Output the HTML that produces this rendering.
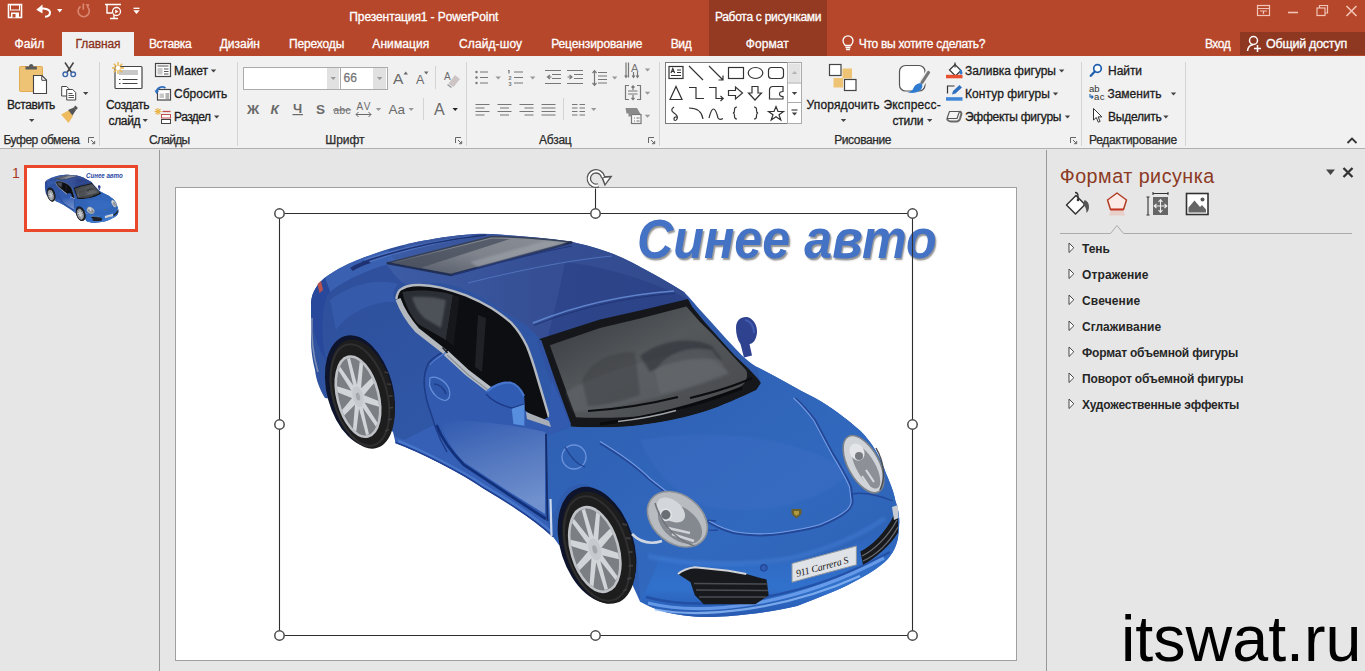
<!DOCTYPE html>
<html lang="ru">
<head>
<meta charset="utf-8">
<title>PowerPoint</title>
<style>
html,body{margin:0;padding:0;}
body{width:1365px;height:671px;overflow:hidden;position:relative;background:#e6e6e6;font-family:"Liberation Sans",sans-serif;font-size:12px;color:#262626;}
.abs,.t{position:absolute;}
.t{white-space:nowrap;line-height:14px;font-size:12px;color:#1c1c1c;-webkit-text-stroke:.300px currentColor;}
.w{color:#fff;}
#titlebar{position:absolute;left:0;top:0;width:1365px;height:56px;background:#b7472a;}
#ctx{position:absolute;left:709px;top:0;width:118px;height:56px;background:#943a22;}
#share{position:absolute;left:1240px;top:32px;width:125px;height:23px;background:#8f3821;}
#hometab{position:absolute;left:62px;top:32px;width:72px;height:25px;background:#f1f1f1;}
#ribbon{position:absolute;left:0;top:56px;width:1365px;height:92px;background:#f1f1f1;border-bottom:1px solid #b0b0b0;}
.sep{position:absolute;top:62px;width:1px;height:84px;background:#d4d4d4;}
.gl{position:absolute;top:133px;font-size:12px;line-height:14px;color:#2b2b2b;white-space:nowrap;-webkit-text-stroke:.250px currentColor;}
#leftdiv{position:absolute;left:159px;top:150px;width:1px;height:521px;background:#989898;}
#rightdiv{position:absolute;left:1046px;top:150px;width:1px;height:521px;background:#989898;}
#slide{position:absolute;left:175px;top:187px;width:840px;height:472px;background:#fff;border:1px solid #a0a0a0;}
#thumb{position:absolute;left:24px;top:165px;width:108px;height:61px;background:#fff;border:3px solid #e9492a;}
#wm{position:absolute;left:1121px;top:602px;font-size:64.6px;line-height:74px;color:#000;white-space:nowrap;}
.pi{position:absolute;left:1082px;font-weight:bold;font-size:12px;line-height:14px;color:#262626;white-space:nowrap;}
.tri{position:absolute;left:1068px;width:7px;height:9px;}
.hnd{position:absolute;width:8px;height:8px;border:1.5px solid #6a6a6a;border-radius:50%;background:#fff;}
</style>
</head>
<body>
<!-- ===== title bar + tabs ===== -->
<div id="titlebar"></div>
<div id="ctx"></div>
<div id="share"></div>
<div id="hometab"></div>
<div id="ribbon"></div>
<!-- QAT icons -->
<svg class="abs" style="left:0;top:0" width="160" height="32" viewBox="0 0 160 32">
 <!-- save -->
 <path d="M8.5 4.5h13v13h-13z" fill="none" stroke="#fff" stroke-width="1.6"/>
 <rect x="10.5" y="5" width="9" height="5" fill="#b7472a" stroke="#fff" stroke-width="1"/>
 <rect x="11" y="12.5" width="8" height="5" fill="#fff"/><rect x="12.5" y="14" width="3" height="3.5" fill="#b7472a"/>
 <!-- undo -->
 <path d="M38 9.5 C44 7.5 50 9 50 12.5 C50 15 48 16.5 45 16.8" fill="none" stroke="#fff" stroke-width="2"/>
 <path d="M36.3 9.8 L42.5 4.5 L42.5 13.5z" fill="#fff"/>
 <path d="M57 9h5.4l-2.7 3.4z" fill="#fff"/>
 <!-- redo dimmed -->
 <path d="M80.5 6.5 A5.6 5.6 0 1 0 87.5 7" fill="none" stroke="#d98672" stroke-width="1.6"/>
 <path d="M83.3 3.5v6.2" stroke="#d98672" stroke-width="1.6"/><path d="M85.5 4l4 .3-1.6 3.6z" fill="#d98672"/>
 <!-- present -->
 <path d="M105 4.5h16M107 5v8h5M110 18.5h8M114 14v4" fill="none" stroke="#fff" stroke-width="1.4"/>
 <circle cx="116.5" cy="11.5" r="4" fill="#b7472a" stroke="#fff" stroke-width="1.3"/><path d="M115.2 9.5v4l3.3-2z" fill="#fff"/>
 <!-- customise -->
 <path d="M133.5 8.3h6" stroke="#fff" stroke-width="1.3"/><path d="M133.3 10.3h6.4l-3.2 3.6z" fill="#fff"/>
</svg>
<div class="t w" style="letter-spacing:-0.09px;left:349.3px;top:10px;font-size:12px;">Презентация1 - PowerPoint</div>
<div class="t w" style="letter-spacing:-0.28px;left:714.9px;top:10px;font-size:12px;">Работа с рисунками</div>
<!-- window controls -->
<svg class="abs" style="left:1250px;top:0" width="115" height="24" viewBox="0 0 115 24">
 <g fill="none" stroke="#f0c4b6" stroke-width="1.2">
 <rect x="7.5" y="5.5" width="12" height="10"/><path d="M7.5 8.5h12M10 11h7M13.5 11v3"/>
 <path d="M38 12.5h10" stroke-width="1.6"/>
 <rect x="67" y="8" width="8" height="7.5"/><path d="M69.5 8V5.5h8V13h-2.5"/>
 <path d="M96.5 6l10 10M106.5 6l-10 10" stroke-width="1.6"/>
 </g>
</svg>

<div class="t w" style="letter-spacing:0.06px;left:14.5px;top:37px;">Файл</div>
<div class="t" style="letter-spacing:-0.10px;left:75.5px;top:37px;color:#8a3019;">Главная</div>
<div class="t w" style="letter-spacing:-0.29px;left:148.9px;top:37px;">Вставка</div>
<div class="t w" style="letter-spacing:-0.01px;left:219.7px;top:37px;">Дизайн</div>
<div class="t w" style="letter-spacing:-0.12px;left:288.9px;top:37px;">Переходы</div>
<div class="t w" style="letter-spacing:0.09px;left:372.3px;top:37px;">Анимация</div>
<div class="t w" style="letter-spacing:0.11px;left:459.0px;top:37px;">Слайд-шоу</div>
<div class="t w" style="letter-spacing:-0.11px;left:551.2px;top:37px;">Рецензирование</div>
<div class="t w" style="letter-spacing:-0.37px;left:670.7px;top:37px;">Вид</div>
<div class="t w" style="letter-spacing:0.06px;left:745.8px;top:37px;">Формат</div>
<svg class="abs" style="left:840px;top:34px" width="16" height="18" viewBox="0 0 16 18"><path d="M5.2 11.5 C3.5 9.5 3 8.2 3 6.8 A5 5 0 0 1 13 6.8 C13 8.2 12.5 9.500 10.800 11.5z M5.5 13.500h5 M6 15.500h4" fill="none" stroke="#fff" stroke-width="1.300"/></svg>
<div class="t w" style="letter-spacing:-0.29px;left:858.8px;top:37px;">Что вы хотите сделать?</div>
<div class="t w" style="letter-spacing:-0.44px;left:1204.9px;top:37px;">Вход</div>
<svg class="abs" style="left:1245px;top:34px" width="18" height="20" viewBox="0 0 18 20"><circle cx="8.5" cy="6.500" r="4" fill="none" stroke="#fff" stroke-width="1.500"/><path d="M2.500 17 C3 13 5 11 8 10.800" fill="none" stroke="#fff" stroke-width="1.500"/><path d="M9 14.500h7M12.500 11v7" stroke="#fff" stroke-width="1.500"/></svg>
<div class="t w" style="letter-spacing:-0.25px;left:1266.0px;top:37px;font-size:12.5px;">Общий доступ</div>

<!-- separators -->
<div class="sep" style="left:99px"></div><div class="sep" style="left:237px"></div><div class="sep" style="left:466px"></div><div class="sep" style="left:659px"></div><div class="sep" style="left:1081px"></div><div class="sep" style="left:1185px"></div>
<div class="sep" style="left:435px;top:66px;height:23px"></div><div class="sep" style="left:423px;top:98px;height:22px"></div><div class="sep" style="left:563px;top:98px;height:22px"></div>
<!-- group labels -->
<div class="gl" style="letter-spacing:-0.45px;left:3.4px">Буфер обмена</div>
<div class="gl" style="letter-spacing:-0.70px;left:149.0px">Слайды</div>
<div class="gl" style="letter-spacing:-0.04px;left:325.2px">Шрифт</div>
<div class="gl" style="letter-spacing:-0.23px;left:539.0px">Абзац</div>
<div class="gl" style="letter-spacing:-0.39px;left:834.2px">Рисование</div>
<div class="gl" style="letter-spacing:-0.24px;left:1088.9px">Редактирование</div>
<!-- clipboard -->
<div class="t" style="letter-spacing:-0.35px;left:6.9px;top:98px;">Вставить</div>
<div class="t" style="letter-spacing:-0.34px;left:105.9px;top:98px;">Создать</div>
<div class="t" style="letter-spacing:-0.32px;left:108.5px;top:114px;">слайд</div>
<div class="t" style="letter-spacing:-0.01px;left:174.1px;top:64px;">Макет</div>
<div class="t" style="letter-spacing:-0.02px;left:174.1px;top:87px;">Сбросить</div>
<div class="t" style="letter-spacing:-0.55px;left:174.1px;top:110px;">Раздел</div>
<!-- font -->
<div class="abs" style="left:243px;top:67px;width:96px;height:21px;background:#fff;border:1px solid #ababab;"></div>
<div class="abs" style="left:327px;top:68px;width:12px;height:21px;background:#e1e1e1;"></div>
<div class="abs" style="left:340px;top:67px;width:46px;height:21px;background:#fff;border:1px solid #ababab;"></div>
<div class="abs" style="left:373px;top:68px;width:13px;height:21px;background:#e1e1e1;"></div>
<div class="t" style="letter-spacing:0.02px;left:343.5px;top:71px;color:#777;">66</div>
<!-- drawing -->
<div class="t" style="letter-spacing:0.16px;left:806.5px;top:98px;">Упорядочить</div>
<div class="t" style="letter-spacing:0.16px;left:883.5px;top:98px;">Экспресс-</div>
<div class="t" style="letter-spacing:-0.22px;left:892.4px;top:114px;">стили</div>
<div class="t" style="letter-spacing:-0.05px;left:965.0px;top:64px;">Заливка фигуры</div>
<div class="t" style="letter-spacing:0.07px;left:965.0px;top:87px;">Контур фигуры</div>
<div class="t" style="letter-spacing:-0.27px;left:965.0px;top:110px;">Эффекты фигуры</div>
<!-- editing -->
<div class="t" style="letter-spacing:-0.07px;left:1108.1px;top:64px;">Найти</div>
<div class="t" style="letter-spacing:0.02px;left:1107.4px;top:87px;">Заменить</div>
<div class="t" style="letter-spacing:-0.24px;left:1108.1px;top:110px;">Выделить</div>
<svg class="abs" style="left:0;top:56px" width="1365" height="92" viewBox="0 56 1365 92" font-family="Liberation Sans, sans-serif">
<defs><path id="dd" d="M0 0h5.400l-2.700 3z"/></defs>
<!-- ===== clipboard ===== -->
<rect x="19.500" y="66.500" width="23" height="25" rx="1" fill="#eec373" stroke="#e0ab52" stroke-width="1"/>
<path d="M25.500 69.500v-3h3.500c0-1.500 .800-2.500 2.200-2.500s2.200 1 2.200 2.500h3.500v3z" fill="#5a5a5a"/>
<path d="M33.500 75.500h8.500l4.500 4.500v13.500h-13z" fill="#fff" stroke="#444" stroke-width="1.100"/><path d="M41.800 75.800v4.500h4.500" fill="none" stroke="#444" stroke-width="1"/>
<use href="#dd" x="29" y="119" fill="#444"/>
<!-- scissors -->
<path d="M65 62.500l6.500 10M73.500 62.500l-6.500 10" stroke="#444" stroke-width="1.500" fill="none"/>
<circle cx="65.300" cy="74.300" r="2.300" fill="none" stroke="#3b66a8" stroke-width="1.400"/><circle cx="73.200" cy="74.300" r="2.300" fill="none" stroke="#3b66a8" stroke-width="1.400"/>
<!-- copy -->
<path d="M61.700 86.500h5l2 2v7.500h-7z" fill="#fff" stroke="#444" stroke-width="1"/>
<path d="M66.700 89.500h6l3 3v7.500h-9z" fill="#fff" stroke="#444" stroke-width="1"/><path d="M68.500 93.500h4M68.500 95.500h5.500M68.500 97.500h5.500" stroke="#444" stroke-width=".900"/>
<use href="#dd" x="83" y="92" fill="#444"/>
<!-- format painter -->
<path d="M61 114.500l7.500-4 4.500 5.500-4.500 7z" fill="#eebb5e"/>
<path d="M68 110l6-2.500 2 2.500-3.500 5.500z" fill="#555"/><path d="M74.500 106.500l2.500 2.500" stroke="#555" stroke-width="2.500"/>
<!-- launcher -->
<g id="ln" fill="none" stroke="#666" stroke-width="1"><path d="M88.500 143v-5.500h5.500"/><path d="M91 140l3.500 3.500M94.700 141v2.700h-2.700" /></g>
<!-- ===== slides ===== -->
<rect x="115" y="66.500" width="27" height="22" rx="1" fill="#fff" stroke="#444" stroke-width="1.200"/>
<rect x="119" y="70" width="19" height="5" fill="#c8c8c8"/>
<path d="M119 79.500h1.500M122.500 79.500h15M119 83.500h1.500M122.500 83.500h15" stroke="#444" stroke-width="1"/>
<g stroke="#e8b64c" stroke-width="1.400"><path d="M118 62v12M112 68h12M113.800 63.800l8.400 8.400M122.200 63.800l-8.400 8.400"/></g><circle cx="118" cy="68" r="2.200" fill="#fff"/>
<use href="#dd" x="142.500" y="119" fill="#444"/>
<!-- layout -->
<rect x="155.500" y="63.500" width="15" height="13" fill="#fff" stroke="#444" stroke-width="1.200"/><rect x="157.500" y="68" width="5" height="6.500" fill="#c8c8c8"/><path d="M157.500 66h11M164 69h4.500M164 71.500h4.500M164 74h4.500" stroke="#555" stroke-width="1"/>
<use href="#dd" x="210.800" y="69.500" fill="#444"/>
<!-- reset -->
<rect x="157.500" y="89.500" width="13" height="10.500" fill="#fff" stroke="#444" stroke-width="1.200"/><rect x="159.500" y="93.500" width="4.500" height="4.500" fill="#c8c8c8"/><path d="M165.500 94h3.500M165.500 96h3.500M165.500 98h3.500" stroke="#555" stroke-width=".900"/>
<path d="M156.500 92c0-4 5-6.500 9-4" fill="none" stroke="#2f6fc0" stroke-width="1.800"/><path d="M154.500 90.500l4.500 .300-2.300 3.400z" fill="#2f6fc0"/>
<!-- section -->
<g stroke="#e8b64c" stroke-width="1.100"><path d="M158 108v7M154.500 111.500h7M155.500 109l5 5M160.500 109l-5 5"/></g>
<path d="M162.500 111.500h8" stroke="#c0504d" stroke-width="1.300"/>
<rect x="161.500" y="114.500" width="9" height="3.500" fill="#fff" stroke="#c0504d" stroke-width="1"/><rect x="161.500" y="119.500" width="9" height="4" fill="#fff" stroke="#444" stroke-width="1"/>
<use href="#dd" x="214" y="115.500" fill="#444"/>
<!-- ===== font ===== -->
<use href="#dd" x="330.500" y="77" fill="#999" transform="translate(0 0)"/><use href="#dd" x="377" y="77" fill="#999"/>
<g fill="#6a6a6a">
<text x="393" y="84" font-size="15.500">A</text><path d="M403.500 74.500h4.500l-2.250-3z"/>
<text x="416" y="84" font-size="12.500">A</text><path d="M424 71.500h4.500l-2.250 3z"/>
<text x="444" y="80" font-size="10">A</text>
<text x="247" y="114" font-size="13.500" font-weight="bold">Ж</text>
<text x="270.500" y="114" font-size="13.500" font-style="italic" font-weight="bold">К</text>
<text x="293" y="113" font-size="13" font-weight="bold">Ч</text><rect x="292.500" y="114" width="10.500" height="1.200"/>
<text x="316" y="114" font-size="13.500" font-weight="bold">S</text>
<text x="333.500" y="113.500" font-size="10" textLength="17">abc</text><rect x="333" y="109.500" width="18" height="1"/>
<text x="356.500" y="110" font-size="10" textLength="14">AV</text><path d="M356 114.500h15M358.500 112l-2.500 2.500 2.500 2.500M368.500 112l2.500 2.500-2.500 2.500" fill="none" stroke="#6a6a6a" stroke-width="1"/>
<text x="388.500" y="114" font-size="13.500">Aa</text>
<text x="434" y="115" font-size="16">A</text>
</g>
<path d="M449 83.500l6-8 4.500 3.500-6 7.500z" fill="#cfc4c4" stroke="#bbb" stroke-width=".600"/><path d="M447.500 84.500l4 3" stroke="#999" stroke-width="1.500"/>
<use href="#dd" x="375.800" y="108" fill="#999"/><use href="#dd" x="408.500" y="108" fill="#999"/><use href="#dd" x="452.500" y="108" fill="#222"/>
<use href="#ln" x="367" y="0"/>
<!-- ===== paragraph ===== -->
<g stroke="#777" stroke-width="1.200" fill="none">
<path d="M480 72h8M480 77.500h8M480 83h8"/><path d="M508 70.500h1v3M514 72h9M514 77.500h9M514 83h9" />
<path d="M545 70.500h16M552 74.500h9M552 78.500h9M545 83.500h16M550 75l-2.500 2 2.500 2M547.500 77h4"/>
<path d="M567 70.500h16M574 74.500h9M574 78.500h9M567 83.500h16M569.500 75l2.500 2-2.500 2M567.500 77h4"/>
<path d="M598 72.500h9M598 76h9M598 79.500h9M598 83h9M594.500 71v14M592.500 73l2-2.300 2 2.300M592.500 83l2 2.300 2-2.300"/>
<path d="M626 62.500v15M628.500 62.500v15M633.500 72v5.500M637.500 72v5.500M624.700 75.500l1.300 2 1.300-2M632.200 75.500l1.300 2 1.300-2M636.200 75.500l1.300 2 1.300-2"/>
<path d="M629 85.500h-3.500v14h3.500M637 85.500h3.500v14h-3.500M628 91h9.500M628 94h9.500M633 86v4M631.500 87.500l1.500-1.700 1.500 1.700M633 95v4.500M631.500 98l1.500 1.700 1.500-1.700"/>
<path d="M475.500 104.500h14M475.500 108h9M475.500 111.500h14M475.500 115h9"/>
<path d="M497.500 104.500h14M500 108h9M497.500 111.500h14M500 115h9"/>
<path d="M519.500 104.500h14M524.500 108h9M519.500 111.500h14M524.500 115h9"/>
<path d="M541.500 104.500h14M541.500 108h14M541.500 111.500h14M541.500 115h14"/>
<path d="M572 104.500h5.500M579.500 104.500h5.500M572 108h5.500M579.500 108h5.500M572 111.500h5.500M579.500 111.500h5.500M572 115h5.500M579.500 115h5.500"/>
<rect x="631.500" y="114.500" width="9.500" height="9" fill="#f7f7f7"/><path d="M634 118h1M636.500 118h3M634 121h1M636.500 121h3"/>
</g>
<g fill="#777"><circle cx="476.500" cy="72" r="1.200"/><circle cx="476.500" cy="77.500" r="1.200"/><circle cx="476.500" cy="83" r="1.200"/>
<text x="508.500" y="80" font-size="5.500" font-weight="bold">2</text><text x="508.500" y="86" font-size="5.500" font-weight="bold">3</text>
<text x="631" y="71.500" font-size="11">A</text>
<path d="M625.500 108h11.500l3.500 6h-9v2.500h-3v-3h-2z" fill="#8a8a8a"/></g>
<use href="#dd" x="495.500" y="76.500" fill="#999"/><use href="#dd" x="530" y="76.500" fill="#999"/><use href="#dd" x="612" y="76.500" fill="#999"/>
<use href="#dd" x="644.800" y="68.500" fill="#999"/><use href="#dd" x="644.800" y="91.800" fill="#999"/><use href="#dd" x="644.800" y="114.800" fill="#999"/><use href="#dd" x="591" y="108" fill="#999"/>
<use href="#ln" x="560" y="0"/>
<!-- ===== shapes gallery ===== -->
<rect x="665.500" y="62.500" width="122" height="61" fill="#fff" stroke="#7a7a7a" stroke-width="1"/>
<rect x="787.500" y="62.500" width="14" height="61" fill="#fff" stroke="#ababab" stroke-width="1"/>
<rect x="788.500" y="63.500" width="12" height="19" fill="#e3e3e3"/><path d="M788 83h13M788 102.500h13" stroke="#ababab" stroke-width="1"/>
<path d="M791.800 74h5.400l-2.700-3z" fill="#b5b5b5"/><use href="#dd" x="791.800" y="92" fill="#444"/><use href="#dd" x="791.800" y="112.500" fill="#444"/><path d="M791.500 110h6" stroke="#444" stroke-width="1.200"/>
<g fill="none" stroke="#333" stroke-width="1.200">
<rect x="669" y="66.500" width="14" height="12"/><path d="M677 70h4M677 72.500h4M671 75.500h10M671 73l1.800-4.500 1.800 4.500M671.800 71.500h2"/>
<path d="M689 66l14 14M709 66l14 14M723 75.500v4.500h-4.500"/>
<rect x="728.500" y="67.500" width="15" height="11"/><ellipse cx="755.500" cy="73" rx="7.300" ry="5.500"/><rect x="768.500" y="67.500" width="15" height="11" rx="3"/>
<path d="M670 99.500l6-13 6 13z"/><path d="M689 87.500h7v11h8"/><path d="M709 87.500h7v11h7M720.500 96l2.700 2.500-2.700 2.500"/>
<path d="M728.500 90.500h7v-3.500l7 6-7 6v-3.500h-7z"/><path d="M752 86.500h6v6.500h3.500l-6.500 7-6.500-7h3.500z"/><path d="M769.500 99v-9c0-2 1.500-3.500 3.500-3.500h10v5c-2.500 0-3.500 1-3.500 2.500s1 2.500 3.500 2.500v2.500z"/>
<path d="M674 107c-3 2-3 4 0 6s4 4 3 6-3 2-3 0 1.500-2.500 3.500-1.500"/><path d="M689 108c8 0 13 4 14 11"/><path d="M709 118c3-12 6-12 9 0 1 1.500 3 1.500 5 .500"/>
<path d="M737 107c-2 0-2.500 1-2.500 2.500s.500 3-1.500 3.500c2 .500 1.500 2 1.500 3.500s.500 2.500 2.500 2.500M754 107c2 0 2.500 1 2.500 2.500s-.500 3 1.500 3.500c-2 .500-1.500 2-1.500 3.500s-.500 2.500-2.500 2.500"/>
<path d="M776 106.500l2 5h5.500l-4.500 3.300 1.800 5.200-4.800-3.300-4.800 3.300 1.800-5.200-4.500-3.300h5.500z"/>
</g>
<!-- ===== drawing big buttons ===== -->
<rect x="842.500" y="68.500" width="9.500" height="10" fill="#eec373"/><rect x="833.500" y="78" width="9.500" height="9.500" fill="#eec373"/>
<rect x="829.500" y="64.500" width="11.500" height="11" fill="#fff" stroke="#444" stroke-width="1.200"/><rect x="844.500" y="79.500" width="11.500" height="11" fill="#fff" stroke="#444" stroke-width="1.200"/>
<use href="#dd" x="840.800" y="119" fill="#444"/>
<rect x="899.500" y="65.500" width="25.500" height="25.500" rx="6" fill="#fff" stroke="#555" stroke-width="1.200"/>
<path d="M929 72l-9 14" stroke="#f1f1f1" stroke-width="6.500"/><path d="M928.500 72.500l-6.500 10" stroke="#777" stroke-width="3.200" stroke-linecap="round"/>
<path d="M921.500 83.500c-3.500-1-7 1.500-8 4.500-1 2.500-3 4-6 4.300 4.500 1.500 10 .500 13-2.300 2-2 2.500-4.500 1-6.500z" fill="#2f7bd0"/>
<use href="#dd" x="927" y="119" fill="#444"/>
<!-- fill / outline / effects -->
<path d="M949.500 70l5.500-5.500 6 6-5.500 5.500z" fill="#fff" stroke="#333" stroke-width="1.200"/><path d="M955 62.500v5" stroke="#333" stroke-width="1.200"/><path d="M960 68.500c1.500 1.500 2.500 3 2.500 4.500a1.500 1.500 0 0 1-3 0c0-1.500 .500-3 .500-4.500z" fill="#2f7bd0"/>
<rect x="946" y="74.800" width="16.500" height="3.500" fill="#e8502f"/>
<path d="M947.500 93.500v-7.500h7" fill="none" stroke="#333" stroke-width="1.200"/><path d="M952 94.500l1-3.500 6.500-6 2.500 2.500-6.500 6z" fill="#2f6fc0"/>
<rect x="946" y="97.200" width="16.500" height="3.500" fill="#3f86d8"/>
<path d="M947 118.500l2.500-7h10l-2.500 7z" fill="#f4f4f4" stroke="#555" stroke-width="1.100" stroke-linejoin="round"/><path d="M947 119c.800 2 2.500 2.500 4.500 2.500h5c2 0 3-1.200 3.500-2.700l1.300-4.500c.400-1.500-.300-2.500-1.800-2.800" fill="none" stroke="#6a6a6a" stroke-width="2"/>
<use href="#dd" x="1059" y="69.500" fill="#444"/><use href="#dd" x="1052.800" y="92.500" fill="#444"/><use href="#dd" x="1064.800" y="115.500" fill="#444"/>
<use href="#ln" x="982" y="0"/>
<!-- ===== editing ===== -->
<circle cx="1097.500" cy="68.500" r="3.800" fill="#fff" stroke="#1f5fae" stroke-width="1.700"/><path d="M1094.800 71.500l-4 4.300" stroke="#1f5fae" stroke-width="2.300" stroke-linecap="round"/>
<text x="1089" y="92" font-size="9.500" fill="#333" textLength="10.500">ab</text><text x="1094" y="99.500" font-size="9.500" fill="#333" textLength="10.500">ac</text><path d="M1090 94v3h2.500M1091.500 95.500l1.500 1.500-1.500 1.500" fill="none" stroke="#1f5fae" stroke-width="1.100"/>
<path d="M1093.500 108.500v11.500l2.800-2.500 2 4.700 1.800-.800-2-4.500h3.800z" fill="#fff" stroke="#333" stroke-width="1" stroke-linejoin="round"/>
<use href="#dd" x="1170.800" y="92.500" fill="#444"/><use href="#dd" x="1163.200" y="115.500" fill="#444"/>
<path d="M1347.500 143l4.500-4.500 4.500 4.500" fill="none" stroke="#333" stroke-width="1.800"/>

</svg>


<!-- ===== panels ===== -->
<div id="leftdiv"></div>
<div id="rightdiv"></div>
<div class="t" style="left:12px;top:165px;font-size:14px;line-height:16px;color:#a8391f;-webkit-text-stroke:0;">1</div>
<div id="thumb"><svg class="abs" style="left:.600px;top:.800px" width="105" height="59" viewBox="176 187 840 473"><use href="#carall"/><text x="640" y="257" font-size="56" font-weight="bold" font-style="italic" fill="#2645a2" textLength="294" lengthAdjust="spacingAndGlyphs" font-family="Liberation Sans, sans-serif">Синее авто</text></svg></div>
<div id="slide"></div>
<svg class="abs" style="left:280px;top:200px" width="660" height="440" viewBox="280 200 660 440">
<defs>
<linearGradient id="gBody" x1="0" y1="0" x2="1" y2="1"><stop offset="0" stop-color="#2f4d98"/><stop offset=".45" stop-color="#2f5aaa"/><stop offset="1" stop-color="#2f66c0"/></linearGradient>
<linearGradient id="gRoof" x1="0" y1="0" x2="1" y2="0"><stop offset="0" stop-color="#3c5ca6"/><stop offset=".5" stop-color="#364f94"/><stop offset="1" stop-color="#324a8e"/></linearGradient>
<linearGradient id="gHood" x1="0" y1="0" x2="1" y2="1"><stop offset="0" stop-color="#2f5eb0"/><stop offset=".6" stop-color="#3169be"/><stop offset="1" stop-color="#2d60b3"/></linearGradient>
<linearGradient id="gBump" x1="0" y1="0" x2="0" y2="1"><stop offset="0" stop-color="#2e62b8"/><stop offset=".7" stop-color="#3171cc"/><stop offset="1" stop-color="#2758b0"/></linearGradient>
<linearGradient id="gDoor" gradientUnits="userSpaceOnUse" x1="480" y1="410" x2="510" y2="510"><stop offset="0" stop-color="#7c9ad2" stop-opacity="0"/><stop offset=".55" stop-color="#7c9ad2" stop-opacity=".5"/><stop offset="1" stop-color="#86a3d8" stop-opacity=".75"/></linearGradient>
<linearGradient id="gGlass" x1="0" y1="0" x2="1" y2="1"><stop offset="0" stop-color="#35383c"/><stop offset=".45" stop-color="#55585b"/><stop offset="1" stop-color="#47494d"/></linearGradient>
<linearGradient id="gSun" x1="0" y1="1" x2="1" y2="0"><stop offset="0" stop-color="#4e5462"/><stop offset=".5" stop-color="#7d828b"/><stop offset="1" stop-color="#8b9098"/></linearGradient>
<radialGradient id="gRim"><stop offset="0" stop-color="#d9dbde"/><stop offset=".25" stop-color="#b9bcc0"/><stop offset="1" stop-color="#a4a7ab"/></radialGradient>
<filter id="soft"><feGaussianBlur stdDeviation="1.2"/></filter>
</defs>
<!--CARSTART--><g id="carall">
<!-- body silhouette -->
<path id="carbody" d="M311 305 C311 296 314 287 325 277.500 C338 268 350 263 360 259 C382 250.500 395 247 407.500 244 C440 237 460 235 475 234 C490 233.500 500 234.500 510 235.500 C540 237.500 558 239.500 572.500 242 C600 248 615 254 632 262.500 C650 272 668 282 684 292 C690 298 694 303 697 306.400 L711.800 322.800 L726.600 339.200 L742 355.600 C746 359 750 363 757 367 C775 376 795 388 815 398 C830 406 848 420 860 430.500 C872 442 881 458 886 473.600 C891 485 894 493 895.300 500.500 C898 508 899.300 515 899.300 522 C899 530 898.500 534 898 538 C896 548 892 554 887.300 559.500 C880 567 870 573 860.500 578.200 C852 583 843 587.500 833.600 591.600 C820 597 808 602 797 606 C780 610 765 612.500 750 614 C735 616 720 617 705 617 C690 616.500 678 615 665 612 C655 609 648 606 640 601.500 L628 575 L580 538 L559 545 L553 536.800 C535 520 510 504 484.300 488.800 C460 472 420 452 395.600 443 L393 432 L380 420 L340 400 L325 398 C320 390 316 380 315 370 C312 358 311 348 311 340z" fill="url(#gBody)"/>
<!-- roof shading -->
<path d="M407 244 C440 237 460 235 475 234 C500 234 540 237.500 572 242 C600 248 615 254 632 262.500 C650 272 668 282 684 292 L688 299 L640 311 L600 320 L540 339 C533 330 522 322 507 314 C495 305 485 298 475 294 C460 287 450 284 440 283 L405 284 C398 280 392 272 385 262z" fill="url(#gRoof)"/>
<path d="M565 262 C600 266 645 278 688 299 L640 311 L600 320 L548 337 C552 320 560 290 565 262z" fill="#263c81" opacity=".5"/>
<!-- rear deck -->
<path d="M325 277.500 C338 268 350 263 360 259 C372 254.500 380 252 388 250 L396 262 C380 266 350 276 330 292z" fill="#3d64b6" opacity=".8"/>
<path d="M364 259.500 C380 253 420 243 470 235.500 L476 236.500 C430 244 390 255 368 263z" fill="#4c73c2"/>
<path d="M362 262.500 C395 251 440 240 486 235" fill="none" stroke="#1e3272" stroke-width="1.600"/><path d="M350 268 C356 264 362 262 368 260.500 L371 263 C364 265 358 267.500 353 271z" fill="#1e3272"/>
<!-- sunroof -->
<path d="M387 263 L492 236.500 C520 237 548 239 572 242.200 L451 275z" fill="url(#gSun)" stroke="#364056" stroke-width="1.500" stroke-linejoin="round"/>
<path d="M387 263 L451 275 L572 242.200" fill="none" stroke="#1a2851" stroke-width="2.600" opacity=".75"/>
<path d="M393 263 L492 238.500 L510 239 L420 268z" fill="#474d5c" opacity=".75"/><path d="M470 262 L545 241 L566 243 L478 267z" fill="#a3a7ae" opacity=".55" filter="url(#soft)"/>
<!-- roof seam lines -->
<path d="M452 275 C480 268 520 256 572 246" fill="none" stroke="#223779" stroke-width="1.200"/>
<path d="M468 283 C520 270 570 260 612 256" fill="none" stroke="#4f72bc" stroke-width="1"/>
<path d="M533 323 C570 308 620 295 674 291" fill="none" stroke="#5f84cc" stroke-width="1.400"/>
<path d="M534 325.500 C571 310.500 621 297.500 675 293.500" fill="none" stroke="#203576" stroke-width="1"/>
<!-- rear fender shading -->
<path d="M311 305 C311 296 314 287 325 277.500 L330 292 C322 300 320 330 326 360 C318 350 312 330 311 305z" fill="#28499b"/>
<path d="M317.500 284 l3.500 -3 l2 9 l-3.500 3z" fill="#b8524e"/>
<path d="M312 318 C311 335 313 355 318 372" fill="none" stroke="#9ca6bc" stroke-width="1.600" opacity=".7"/>
<path d="M330 300 C350 285 375 278 398 284 C392 290 392 298 396 302 C380 300 350 310 336 330z" fill="#3e67ba" opacity=".45"/>
<!-- side window -->
<path d="M396.300 298 C397.500 292 399 290 401.400 289 C405 286.500 409 285.500 412.800 285.200 C422 284.500 432 285.500 440.700 287.700 C450 290 458 292.500 466 295.300 C475 299 484 303.500 491.300 308 C499 313 506 318 511.600 323.200 C518 330 523 338 526.800 346 C531 356 534 366 537 376.400 L544.500 401.700 L549 417 L541 421 L524 410 L505 398 L488.800 387.800 L466 371.300 L444.500 351 L415.300 328.300 C407 319 400 308 396.300 298z" fill="#0d0e11"/>
<path d="M402.500 292 C418 289 440 290.500 453 295 L446 340 L418 324 C410 315 404.500 303 402.500 292z" fill="#2b2e34"/>
<path d="M412 297 C422 296 436 297 446 300 L441 328 L424 318 C418 312 414 305 412 297z" fill="#6a7078" opacity=".55" filter="url(#soft)"/>
<path d="M453 295 L459.500 297 L453.500 346 L446 340z" fill="#15171b"/>
<path d="M478 315 L486 318 L482 372 L475 367z" fill="#24272c" opacity=".8"/>
<path d="M396.300 299 C397.500 292 399 290 401.400 289 C405 286.500 409 285.500 412.800 285.200 C422 284.500 432 285.500 440.700 287.700 C450 290 458 292.500 466 295.300 C475 299 484 303.500 491.300 308 C499 313 506 318 511.600 323.200 C518 330 523 338 526.800 346 C531 356 534 366 537 376.400 L544.500 401.700 L551 424" fill="none" stroke="#b4b9c0" stroke-width="2.400"/>
<!-- windshield -->
<path d="M539.400 339 L600 319.500 L640 310.500 L688 299 L692 306.400 L705.200 322.800 L720 339.200 L734.700 355.600 L748.700 368.700 L757.700 378.500 L761 383 L756.400 390 C745 396 730 402 717.800 406.900 C705 411.500 690 416 676 419.400 C660 422.500 642 425 624 426.700 C605 427.500 588 427.500 571.700 426.700 L567.600 423.600 L552 380z" fill="#15171a"/>
<path d="M549.800 345.300 L600 328 L640 318.500 L686.400 306.400 L700 322 L712.600 334.300 L735.600 358.900 L746.200 370.300 C748 375 747 380 743.800 384 L738.700 388 C720 396 698 405 676 411 C660 414 642 416.500 624 417.300 C606 418 590 418 576 417.300 L566 390z" fill="url(#gGlass)"/>
<path d="M566 392 C600 372 650 358 700 350 L730 374 C700 386 650 402 590 411 L574 412z" fill="#63676d" opacity=".5" filter="url(#soft)"/>
<path d="M640 356 C660 340 690 336 712 346 L722 360 C700 356 670 360 650 372z" fill="#2c2f34" opacity=".55" filter="url(#soft)"/>
<path d="M600 424 C640 419 690 408 742 388" fill="none" stroke="#0a0b0d" stroke-width="3"/>
<path d="M618 421.500 C640 419 660 415 676 410.500" fill="none" stroke="#9fa4aa" stroke-width="1.300"/>
<path d="M588 411 C620 409 650 404 678 397 M690 398 C715 392 735 386 752 378" fill="none" stroke="#0c0d0f" stroke-width="2.200"/>
<path d="M582 380 C590 362 610 352 635 352 L640 395 C620 402 600 406 588 406z" fill="#3a3c40" opacity=".45" filter="url(#soft)"/>
<path d="M655 372 C665 352 690 345 712 350 L728 372 C705 382 680 390 660 394z" fill="#6c6e71" opacity=".45" filter="url(#soft)"/>
<!-- a-pillar driver side -->
<path d="M539 340.500 L553 381 L569 425" fill="none" stroke="#3052a1" stroke-width="4.500"/>
<!-- hood -->
<path d="M571.700 426.700 C588 427.500 605 427.500 624 426.700 C660 424 700 414 717.800 406.900 C735 400 748 394 756.400 390 L761 383 L757 367 C775 376 795 388 815 398 C830 406 848 420 860 430.500 C872 442 881 458 886 473.600 C891 485 894 493 895.300 500.500 C898 508 899.300 515 899.300 522 L898 538 C870 590 760 615 705 617 C680 616 655 609 640 601 C640 570 635 540 624 521 C615 500 600 488 585 484 C570 483 560 492 556 510 L548 520 L546 436z" fill="url(#gHood)"/>
<path d="M640 440 C700 430 780 430 850 470 C830 500 760 520 700 505 C670 490 650 465 640 440z" fill="#416fc9" opacity=".35" filter="url(#soft)"/>
<!-- hood panel line -->
<path d="M600 443 C620 455 640 470 650 480 C675 500 695 515 710 523 C722 530 732 533 740 534 C755 536 765 536 780 534 C797 531.500 810 529 820.200 526 C835 520 843 515 847 511.200 C852 506 853 503 852.400 500.500 C852 495 851.500 491 851 487 C846 475 840 466 833.600 454.900 C827 443 821 431 814.900 420 C808 411 802 404 795 398" fill="none" stroke="#21428f" stroke-width="2.200" opacity=".85"/>
<path d="M600 441.500 C620 453.500 640 468.500 650 478.500 C675 498.500 695 513.500 710 521.500 C722 528.500 732 531.500 740 532.500 C755 534.500 765 534.500 780 532.500 C797 530 810 527.500 820.200 524.500 C835 518.500 843 513.500 847 509.700 C850.500 506 851.500 503 851 500 C850.500 495 850 491 849.500 487 C844.500 475 838.500 466 832.100 454.900 C825.500 443 819.500 431 813.400 420 C806.500 411 800.500 404 793.500 398" fill="none" stroke="#739be4" stroke-width="1.100"/>
<path d="M852 494 C862 492 878 495 893 501" fill="none" stroke="#244899" stroke-width="1.300"/>
<path d="M706 520 l10 1 M700 527 C705 530 712 531 718 530" fill="none" stroke="#244899" stroke-width="1.300"/>
<!-- bumper lower -->
<path d="M640 601.500 C650 585 655 570 660 556 C700 565 760 568 800 560 C840 552 870 540 898 520 L898 538 C896 548 892 554 887.300 559.500 C880 567 870 573 860.500 578.200 C852 583 843 587.500 833.600 591.600 C820 597 808 602 797 606 C780 610 765 612.500 750 614 C735 616 720 617 705 617 C690 616.500 678 615 665 612 C655 609 648 606 640 601.500z" fill="url(#gBump)"/>
<path d="M646 597 C700 612 800 602 890 552" fill="none" stroke="#20489c" stroke-width="2.500" opacity=".75"/>
<path d="M648 603 C700 616 790 608 884 558" fill="none" stroke="#6ea2ee" stroke-width="3.200" opacity=".85"/><path d="M655 609.500 C700 618 780 612 860 576" fill="none" stroke="#8fbcf6" stroke-width="2.200" opacity=".8"/>
<!-- side door shading -->
<path d="M424 384 C426 400 430 415 440 435.500 C447 447 453 456 460 463 L545 515.500 L546 436 L571 426 L552 380 L549 417 L541 421 L524 410 L488.800 387.800 L444.500 351 C434 357 426 366 424 384z" fill="#325bb0"/>
<path d="M440 420 C470 420 510 424 545 432 L545 514 L505 489 L464 462 C452 450 444 436 440 420z" fill="url(#gDoor)"/>
<!-- sill -->
<path d="M436 424 C440 436 447 447 463.400 463.800 L505 491 L545 517 L547 522 L553 536.800 C535 520 510 504 484.300 488.800 C460 472 420 452 395.600 443 L395 436 L404 440z" fill="#3560b6"/>
<path d="M398 441 C420 450 460 470 484.300 486 C510 501 535 517 551 532" fill="none" stroke="#4f7fd2" stroke-width="3" opacity=".7"/>
<path d="M395.600 442.500 C420 451.500 460 471.500 484.300 488.300 C510 503.500 535 519.500 553 536.300" fill="none" stroke="#1e3f92" stroke-width="1.600"/>
<path d="M436.500 425 C441 437 448 448.500 464 465 L505 492.200 L546 519" fill="none" stroke="#12307a" stroke-width="2.800"/>
<!-- door rear cut + handle -->
<path d="M444.500 351 C436 356 430 360 428 363.700 C425 370 424 377 424.200 384 C425 394 427 403 430.500 411.900 C433 421 436 430 440.700 440 L447 452" fill="none" stroke="#1e3b86" stroke-width="1.500"/>
<path d="M446 352.500 C438 357.500 432 361.500 430 365" fill="none" stroke="#6089d7" stroke-width="1"/>
<path d="M430 378 C436 375 446 381 449 389 C451 395 449.500 400 445 400.500 C438 399.500 431.500 393 429.500 385z" fill="#3058aa" stroke="#658fd9" stroke-width="1.200"/>
<path d="M434 384 C439 384 444 388 446 394" fill="none" stroke="#1f3e8b" stroke-width="1.600"/>
<path d="M546 434 L547.500 521" stroke="#162c6a" stroke-width="1.800"/>
<path d="M550.500 499 L551.500 536" stroke="#dfe7f5" stroke-width="2.200" opacity=".9"/>
<!-- fuel cap -->
<circle cx="574" cy="457" r="12" fill="none" stroke="#6b93dd" stroke-width="1.300"/>
<path d="M565 447 C571 458 578 465 585 467" fill="none" stroke="#21428f" stroke-width="1.300"/>
<path d="M398 299 C402 310 409 321 417 330 L445 352" fill="none" stroke="#b3b8bf" stroke-width="5.200"/>
<path d="M446 353 L467 372.500 L490 390" fill="none" stroke="#b9bec5" stroke-width="6"/>
<path d="M447 355 L468 374.500 L490 391.500" fill="none" stroke="#8d9299" stroke-width="1.200"/>
<path d="M442.500 347.500 l5 5.500" stroke="#20242c" stroke-width="1.600"/>
<!-- left mirror -->
<path d="M486 393 C488 388 494 384 504 381.500 C512 381 520 386 524.300 396.700 L525 412 L524.300 425.800 L513 424 L511.600 408 C500 405 490 400 486 393z" fill="#315cb3"/>
<path d="M487 391.500 C494 385 502 382.500 510 382.500 C516 384 521 389 524 396" fill="none" stroke="#4677cd" stroke-width="2.200"/>
<path d="M511.600 408 L524.300 404 L524.300 425.800 L513.500 424z" fill="#578fde"/>
<path d="M486 394 C492 401 502 405.500 511.600 408 L524 404" fill="none" stroke="#1d3a86" stroke-width="1.300"/>
<path d="M526 412 L549 421 L551 427 L527 419z" fill="#a9aeb6"/>
<!-- right mirror -->
<path d="M736 328 C736 320 741 316.500 747 317 C754 318.500 757.500 326 757 333 C756 340 753 344 749.500 344 L752 355.600 L744 357.500 L740.500 344 C737.500 340 736 334 736 328z" fill="#2e4290"/>
<path d="M745 320 C751 321 754 327 754 333" fill="none" stroke="#425caf" stroke-width="2"/>
<!-- wheel arches + wheels -->
<ellipse cx="360" cy="391" rx="33" ry="57" transform="rotate(-15 360 391)" fill="#0d142c"/>
<ellipse cx="362" cy="394" rx="30.500" ry="56" transform="rotate(-15 362 394)" fill="#1d1d1e"/>
<ellipse cx="360" cy="395" rx="27" ry="52" transform="rotate(-15 360 395)" fill="none" stroke="#2f2f31" stroke-width="2"/>
<ellipse cx="358" cy="396.600" rx="21" ry="41.500" transform="rotate(-14 358 396.600)" fill="#7b7e83"/>
<g transform="translate(358 396.600) rotate(-14) scale(20 40.500)"><path d="M0.100 -0.100 L0.075 -0.970 L-0.075 -0.970 L-0.100 -0.100z M0.140 -0.022 L0.631 -0.741 L0.509 -0.829 L-0.022 -0.140z M0.126 0.064 L0.946 -0.228 L0.899 -0.371 L0.064 -0.126z M0.064 0.126 L0.899 0.371 L0.946 0.228 L0.126 -0.064z M-0.022 0.140 L0.509 0.829 L0.631 0.741 L0.140 0.022z M-0.100 0.100 L-0.075 0.970 L0.075 0.970 L0.100 0.100z M-0.140 0.022 L-0.631 0.741 L-0.509 0.829 L0.022 0.140z M-0.126 -0.064 L-0.946 0.228 L-0.899 0.371 L-0.064 0.126z M-0.064 -0.126 L-0.899 -0.371 L-0.946 -0.228 L-0.126 0.064z M0.022 -0.140 L-0.509 -0.829 L-0.631 -0.741 L-0.140 -0.022z" fill="#d2d5d8"/><circle r=".26" fill="#c6c9cd"/><circle r=".1" fill="#a4a7ab"/></g><ellipse cx="358" cy="396.600" rx="20.5" ry="41.0" transform="rotate(-14 358 396.600)" fill="none" stroke="#bfc2c6" stroke-width="2.600"/>
<ellipse cx="597" cy="545" rx="36.500" ry="60" transform="rotate(-18 597 545)" fill="#0d142c"/>
<ellipse cx="598.800" cy="547.700" rx="34" ry="58" transform="rotate(-18 598.800 547.700)" fill="#1d1d1e"/>
<ellipse cx="597" cy="548.500" rx="30" ry="54" transform="rotate(-18 597 548.500)" fill="none" stroke="#2f2f31" stroke-width="2"/>
<ellipse cx="594.800" cy="549.500" rx="24" ry="44" transform="rotate(-16 594.800 549.500)" fill="#7b7e83"/>
<g transform="translate(594.800 549.500) rotate(-16) scale(23 43)"><path d="M0.100 -0.100 L0.075 -0.970 L-0.075 -0.970 L-0.100 -0.100z M0.140 -0.022 L0.631 -0.741 L0.509 -0.829 L-0.022 -0.140z M0.126 0.064 L0.946 -0.228 L0.899 -0.371 L0.064 -0.126z M0.064 0.126 L0.899 0.371 L0.946 0.228 L0.126 -0.064z M-0.022 0.140 L0.509 0.829 L0.631 0.741 L0.140 0.022z M-0.100 0.100 L-0.075 0.970 L0.075 0.970 L0.100 0.100z M-0.140 0.022 L-0.631 0.741 L-0.509 0.829 L0.022 0.140z M-0.126 -0.064 L-0.946 0.228 L-0.899 0.371 L-0.064 0.126z M-0.064 -0.126 L-0.899 -0.371 L-0.946 -0.228 L-0.126 0.064z M0.022 -0.140 L-0.509 -0.829 L-0.631 -0.741 L-0.140 -0.022z" fill="#d2d5d8"/><circle r=".26" fill="#c6c9cd"/><circle r=".1" fill="#a4a7ab"/></g><ellipse cx="594.800" cy="549.500" rx="23.5" ry="43.5" transform="rotate(-16 594.800 549.500)" fill="none" stroke="#bfc2c6" stroke-width="2.600"/>
<path d="M384.500 372 l4 1 M387 384 l4 .5 M388.500 396 l4 0 M389 408 l4 -.5 M388 420 l4 -1 M385 431 l4 -1.500" stroke="#3c3c3e" stroke-width="1.600"/>
<path d="M622.500 524 l4.500 1 M626 538 l4.500 .5 M628 552 l4.500 0 M628.500 566 l4.500 -.5 M627 579 l4.500 -1 M623 591 l4 -1.500" stroke="#3c3c3e" stroke-width="1.800"/>
<!-- headlights -->
<ellipse cx="677.400" cy="519.200" rx="33" ry="24" transform="rotate(38 677.400 519.200)" fill="#b8bcc1" stroke="#8d9298" stroke-width="1.600"/>
<ellipse cx="680" cy="524" rx="25" ry="16" transform="rotate(38 680 524)" fill="#84898f"/>
<ellipse cx="671" cy="510" rx="16" ry="10" transform="rotate(38 671 510)" fill="#d3d6da"/>
<circle cx="665.800" cy="514.700" r="5.600" fill="#6a6f75" stroke="#dfe2e5" stroke-width="1.800"/>
<path d="M668 528 L690 533 M672 534 L694 541" stroke="#cfd2d6" stroke-width="2.500"/>
<path d="M655 503 C660 520 672 538 694 546" fill="none" stroke="#70757b" stroke-width="1.500"/>
<ellipse cx="863.500" cy="464.200" rx="15.500" ry="31.500" transform="rotate(-29 863.500 464.200)" fill="#d0d3d7" stroke="#7d8288" stroke-width="1.600"/>
<ellipse cx="866" cy="467" rx="9.500" ry="24" transform="rotate(-29 866 467)" fill="#8d9197"/>
<ellipse cx="857" cy="452" rx="7" ry="9" transform="rotate(-29 857 452)" fill="#e3e5e8"/>
<circle cx="859" cy="456" r="4" fill="#777b81"/>
<path d="M866 470 l8 12 M862 476 l8 12" stroke="#d4d7db" stroke-width="2.200"/>
<path d="M876 448 C884 462 886 478 880 490" fill="none" stroke="#4a4e55" stroke-width="1.500"/>
<!-- indicator strip by wheel -->
<path d="M632 534 C640 542 650 545 662 541" fill="none" stroke="#cfd6e2" stroke-width="2.600"/>
<path d="M648 556 C690 566 760 566 800 556 C830 548 860 536 885 518" fill="none" stroke="#4a86de" stroke-width="5" opacity=".35" filter="url(#soft)"/>
<!-- grilles -->
<path d="M678 574 C683 570 689 568 694.900 567.300 L728.400 570.700 L746.300 574 L766.500 579.600 L768.700 595.300 L755.300 604.200 L703.800 604.200 L694.900 595.300 L690.400 581.900z" fill="#17191c"/>
<path d="M694 583.500 L768 584 M696 590 L768 590.500 M699 597 L766 597" stroke="#4a4e54" stroke-width="1.400"/>
<path d="M678 574 C683 570 689 568 694.900 567.300 L728.400 570.700 L746.300 574" fill="none" stroke="#d0d4da" stroke-width="2"/>
<path d="M860.400 551.400 C872 546 886 532 894 515 L898 508.500 L898 532.600 C890 546 876 558 863 564.800z" fill="#17191c"/>
<path d="M862 556 C874 550 888 537 897 520 M863 561 C876 555 889 543 898 527" fill="none" stroke="#6a6e74" stroke-width="1.300"/>
<path d="M892 507 L898 505 L898.500 518 L894 520z" fill="#c9cdd3"/>
<!-- plate -->
<path d="M792 563.500 L856.400 546 L856.400 564.800 L792 582.200z" fill="#dfe2e6" stroke="#8f96a0" stroke-width="1"/>
<text x="797" y="577" font-size="10" font-style="italic" font-family="Liberation Serif, serif" fill="#1a1a1a" transform="rotate(-15.200 797 577)" textLength="54">911 Carrera S</text>
<circle cx="763.800" cy="567.800" r="3.200" fill="#315cb5" stroke="#204592" stroke-width="1.200"/>
<!-- badge -->
<path d="M791.500 509 h10 v5 l-5 4.500 l-5 -4.500z" fill="#6a5f2c"/><path d="M794 511 h5 v3 l-2.500 2 l-2.500 -2z" fill="#b09a40"/>
</g>
<!--CAREND-->
</svg>

<div id="ttl" class="abs" style="left:637.300px;top:207px;font-size:55px;line-height:64px;font-weight:bold;font-style:italic;color:#4472c4;white-space:nowrap;transform-origin:0 0;transform:scaleX(.914);text-shadow:1.500px 1.500px 1.500px rgba(60,60,60,.55);">Синее авто</div>
<svg class="abs" style="left:270px;top:165px" width="660" height="480" viewBox="270 165 660 480">
<path d="M279.500 213.500h633v422h-633z" fill="none" stroke="#2e2e2e" stroke-width="1.100"/>
<path d="M595.500 208.500v-20" stroke="#2e2e2e" stroke-width="1.100"/>
<g fill="#fff" stroke="#4a4a4a" stroke-width="1.500">
<circle cx="279.500" cy="213.500" r="4.700"/><circle cx="595.500" cy="213.500" r="4.700"/><circle cx="912.500" cy="213.500" r="4.700"/>
<circle cx="279.500" cy="424.500" r="4.700"/><circle cx="912.500" cy="424.500" r="4.700"/>
<circle cx="279.500" cy="635.500" r="4.700"/><circle cx="595.500" cy="635.500" r="4.700"/><circle cx="912.500" cy="635.500" r="4.700"/>
</g>
<path d="M603.100 177.200 A7.200 7.200 0 1 0 598.500 185.300" fill="none" stroke="#555" stroke-width="4.600"/>
<path d="M600.700 176.200 L612.600 175.700 L604.800 186.200z" fill="#555"/>
<path d="M603.100 177.200 A7.200 7.200 0 1 0 598.500 185.300" fill="none" stroke="#fff" stroke-width="2"/>
<path d="M603.300 177.900 L609.600 177.500 L605.200 183.400z" fill="#fff"/>
</svg>

<div class="t" style="letter-spacing:0.51px;left:1059.7px;top:164px;font-size:19.700px;line-height:24px;color:#8c3a24;-webkit-text-stroke:0;">Формат рисунка</div>
<svg class="abs" style="left:1047px;top:150px" width="318" height="280" viewBox="1047 150 318 280">
<path d="M1326 169.500h9l-4.500 5.500z" fill="#444"/><path d="M1343.500 168l9 9M1352.500 168l-9 9" stroke="#333" stroke-width="2.300"/>
<!-- bucket -->
<path d="M1066.500 205l9.500-9.500 9 9-9.500 9.500z" fill="#fff" stroke="#333" stroke-width="1.500" stroke-linejoin="round"/><path d="M1075 192.500c2 0 3 1.500 3 3.500v4" fill="none" stroke="#333" stroke-width="1.400"/><circle cx="1078" cy="200" r="1.300" fill="#333"/>
<path d="M1084.500 200c3 1 4.500 3.500 4.500 7 0 2.500-1 4.500-2.500 6 0-4-1-6.500-3.500-8.500z" fill="#555"/>
<!-- pentagon -->
<path d="M1117 193l9.500 7-3 9.500h-13l-3-9.500z" fill="#fbeae6" stroke="#b23c24" stroke-width="1.500" stroke-linejoin="round"/><path d="M1110.500 209.500h13" stroke="#c8321e" stroke-width="1.800"/><path d="M1110.500 211l-1.500 4.500h16l-1.500-4.500z" fill="#e9c9c2" opacity=".800"/>
<!-- size -->
<rect x="1153" y="197" width="15" height="18" fill="#666"/><path d="M1153 193.500h15M1153 192v3M1168 192v3M1148 197v18M1146.500 197h3M1146.500 215h3" stroke="#333" stroke-width="1.100"/>
<path d="M1160.500 200v12M1154.500 206h12M1158.500 202l2-2.300 2 2.300M1158.500 210l2 2.300 2-2.300M1156.500 204l-2.300 2 2.300 2M1164.500 204l2.300 2-2.300 2" fill="none" stroke="#eee" stroke-width="1.100"/>
<!-- picture -->
<rect x="1186.500" y="193.500" width="21.500" height="21" fill="#fff" stroke="#333" stroke-width="1.600"/><path d="M1188.500 212.500v-5l6-7 5.500 6.500 2-2 4 4.500v3z" fill="#666"/><circle cx="1202.500" cy="199.500" r="2" fill="#555"/>
<!-- line with notch -->
<path d="M1060 233.500h50.500l6.500-8 6.500 8h228.500" fill="none" stroke="#ababab" stroke-width="1"/>
<path d="M1069 243v9.500l4.800-4.750z" fill="#fff" stroke="#444" stroke-width="1"/>
<path d="M1069 269v9.500l4.800-4.750z" fill="#fff" stroke="#444" stroke-width="1"/>
<path d="M1069 295v9.500l4.800-4.750z" fill="#fff" stroke="#444" stroke-width="1"/>
<path d="M1069 321v9.500l4.800-4.750z" fill="#fff" stroke="#444" stroke-width="1"/>
<path d="M1069 347v9.500l4.800-4.750z" fill="#fff" stroke="#444" stroke-width="1"/>
<path d="M1069 373v9.500l4.800-4.750z" fill="#fff" stroke="#444" stroke-width="1"/>
<path d="M1069 399v9.500l4.800-4.750z" fill="#fff" stroke="#444" stroke-width="1"/>
</svg>
<div class="pi" style="letter-spacing:-0.06px;top:242px">Тень</div>
<div class="pi" style="letter-spacing:0.12px;top:268px">Отражение</div>
<div class="pi" style="letter-spacing:0.14px;top:294px">Свечение</div>
<div class="pi" style="letter-spacing:0.04px;top:320px">Сглаживание</div>
<div class="pi" style="letter-spacing:-0.20px;top:346px">Формат объемной фигуры</div>
<div class="pi" style="letter-spacing:-0.16px;top:372px">Поворот объемной фигуры</div>
<div class="pi" style="letter-spacing:-0.19px;top:398px">Художественные эффекты</div>

<div id="wm">itswat.ru</div>
</body>
</html>
